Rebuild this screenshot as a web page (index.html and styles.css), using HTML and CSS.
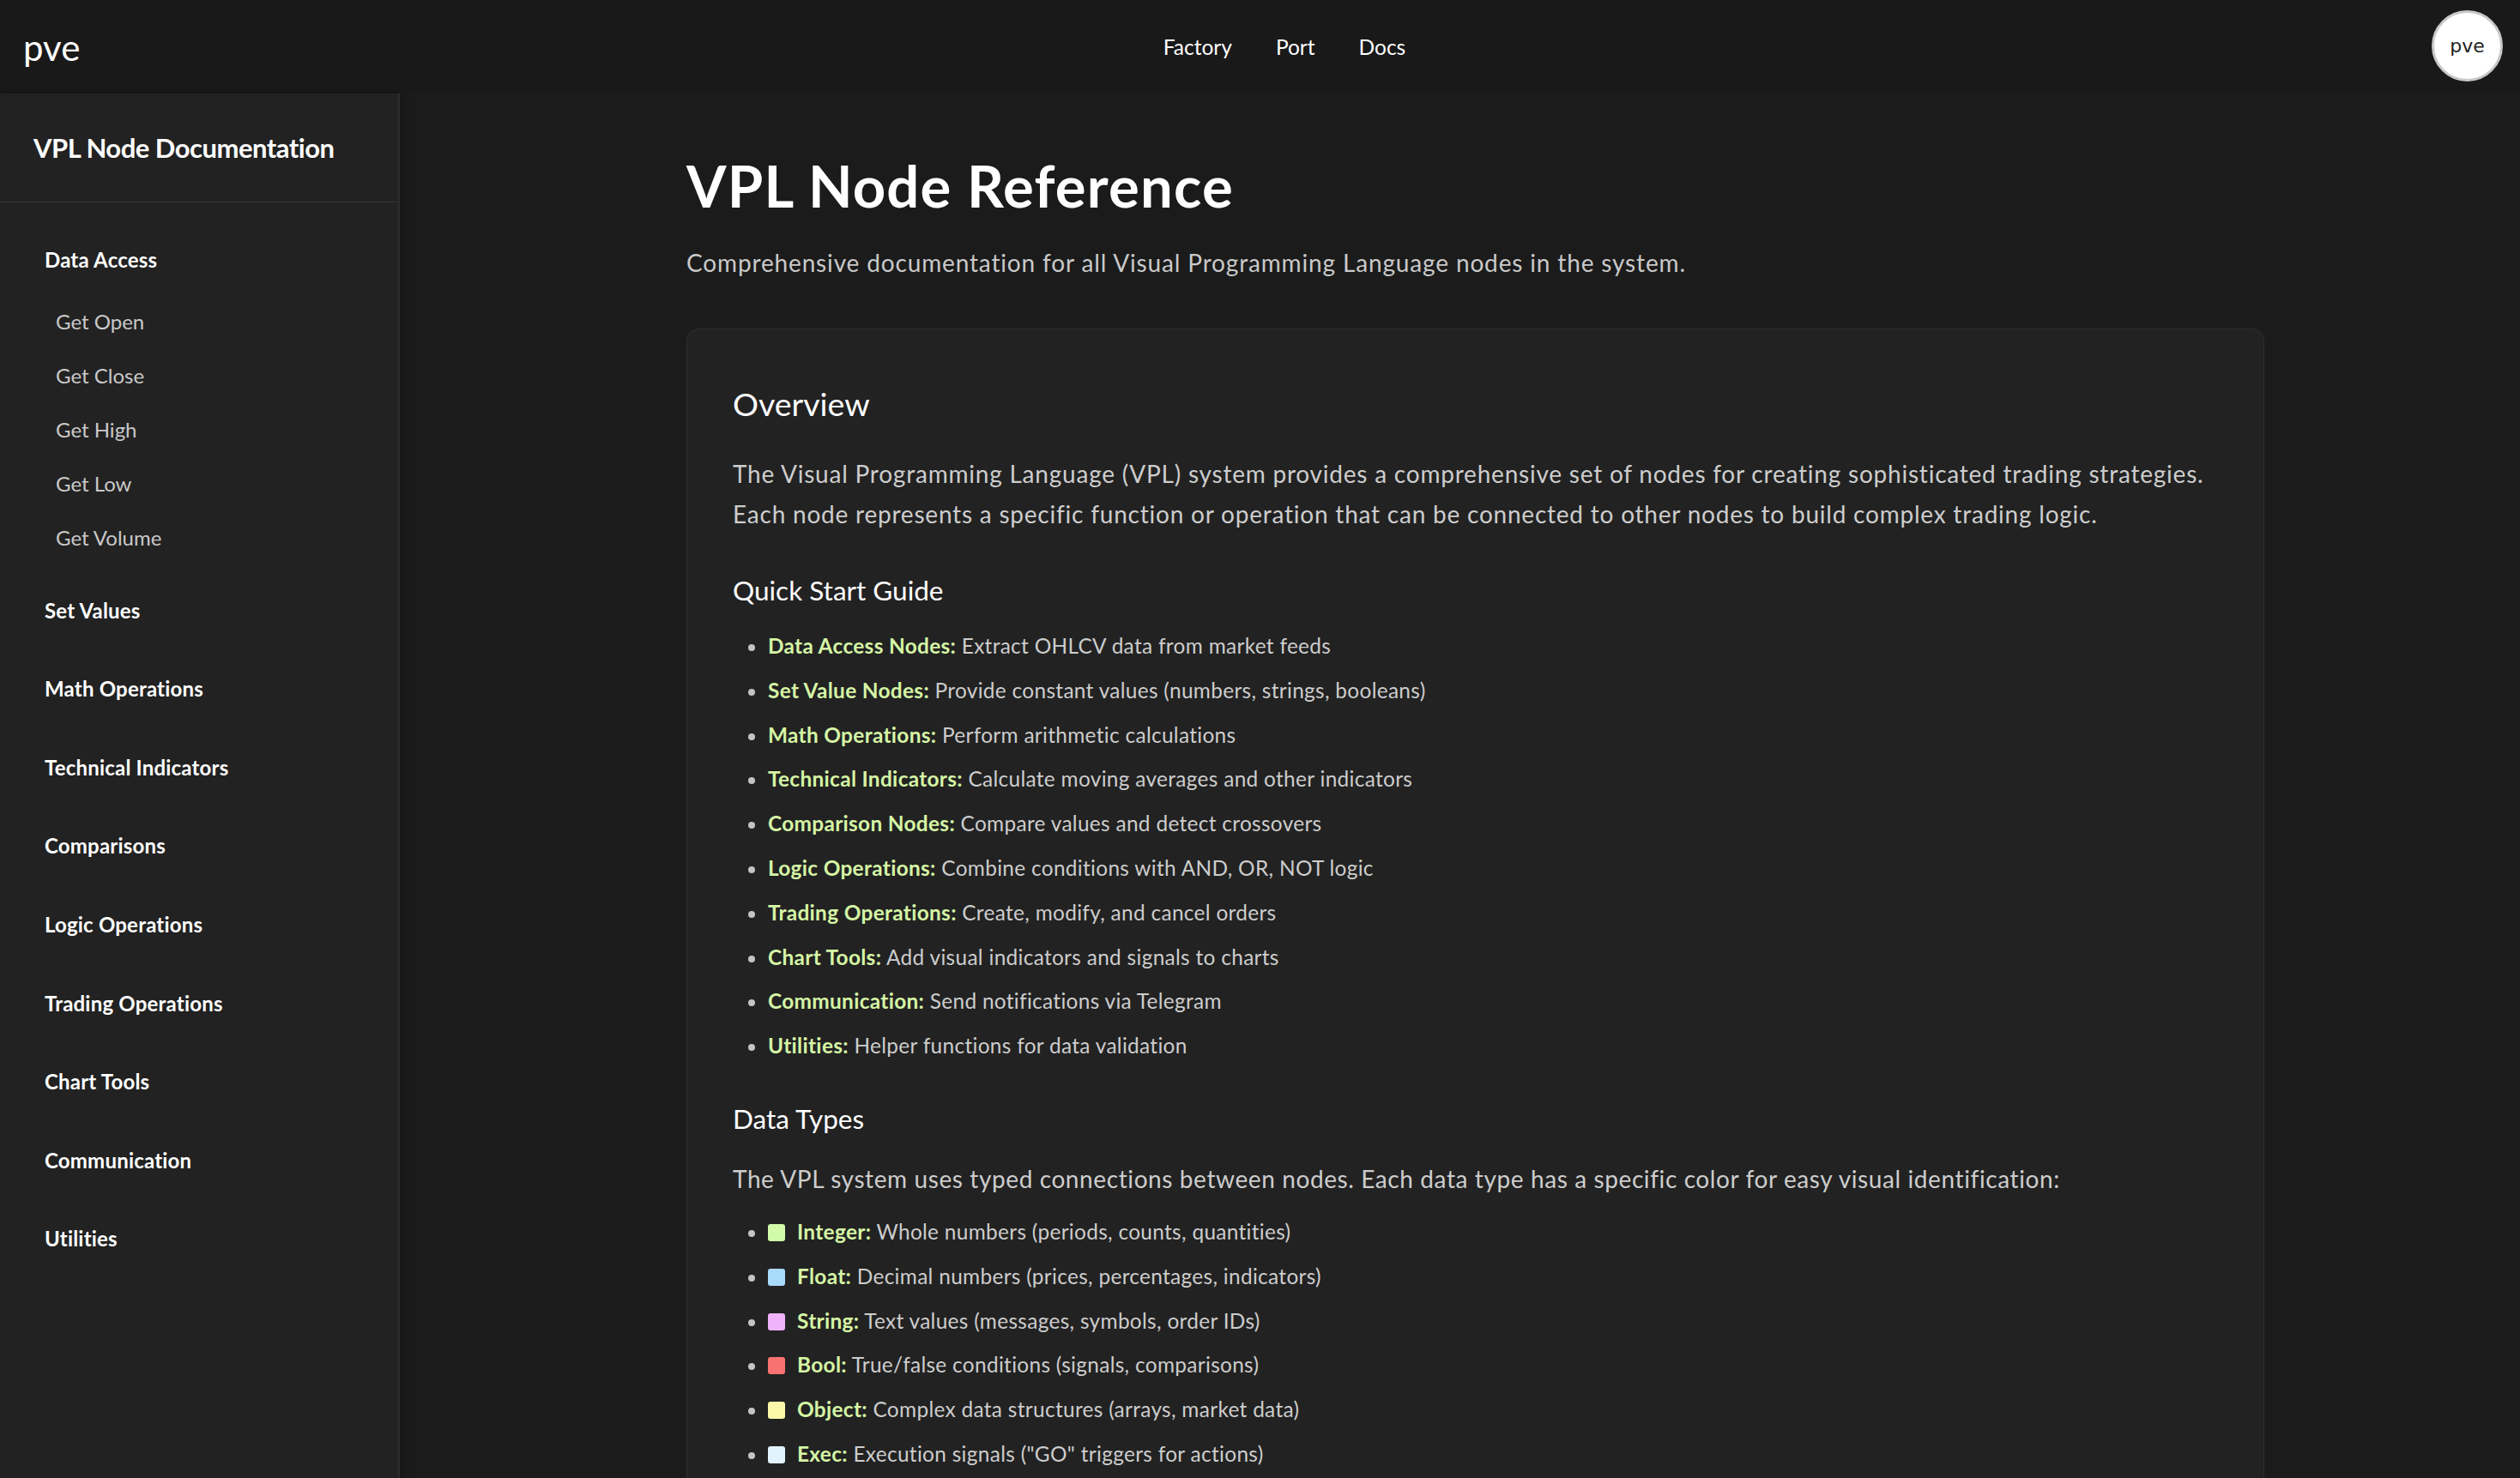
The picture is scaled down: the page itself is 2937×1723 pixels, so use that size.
FILE: index.html
```html
<!DOCTYPE html>
<html lang="en">
<head>
<meta charset="utf-8">
<title>VPL Node Reference</title>
<link rel="stylesheet" href="styles.css">
</head>
<body>
<div class="app">
  <header class="topbar">
    <div class="brand">pve</div>
    <nav class="topnav">
      <a href="#">Factory</a>
      <a href="#">Port</a>
      <a href="#">Docs</a>
    </nav>
    <div class="user-area"><div class="avatar">pve</div></div>
  </header>
  <div class="body-row">
    <aside class="sidebar">
      <div class="sidebar-title">VPL Node Documentation</div>
      <nav class="side-nav">
        <div class="nav-section">
          <div class="nav-heading">Data Access</div>
          <ul class="nav-list">
            <li>Get Open</li>
            <li>Get Close</li>
            <li>Get High</li>
            <li>Get Low</li>
            <li>Get Volume</li>
          </ul>
        </div>
        <div class="nav-section"><div class="nav-heading">Set Values</div></div>
        <div class="nav-section"><div class="nav-heading">Math Operations</div></div>
        <div class="nav-section"><div class="nav-heading">Technical Indicators</div></div>
        <div class="nav-section"><div class="nav-heading">Comparisons</div></div>
        <div class="nav-section"><div class="nav-heading">Logic Operations</div></div>
        <div class="nav-section"><div class="nav-heading">Trading Operations</div></div>
        <div class="nav-section"><div class="nav-heading">Chart Tools</div></div>
        <div class="nav-section"><div class="nav-heading">Communication</div></div>
        <div class="nav-section"><div class="nav-heading">Utilities</div></div>
      </nav>
    </aside>
    <main class="main">
      <div class="content">
        <h1 class="page-title">VPL Node Reference</h1>
        <p class="page-subtitle">Comprehensive documentation for all Visual Programming Language nodes in the system.</p>
        <section class="card">
          <h2 class="card-title">Overview</h2>
          <p class="lead">The Visual Programming Language (VPL) system provides a comprehensive set of nodes for creating sophisticated trading strategies. Each node represents a specific function or operation that can be connected to other nodes to build complex trading logic.</p>
          <h3 class="sub-title">Quick Start Guide</h3>
          <ul class="bullets">
            <li><strong>Data Access Nodes:</strong> Extract OHLCV data from market feeds</li>
            <li><strong>Set Value Nodes:</strong> Provide constant values (numbers, strings, booleans)</li>
            <li><strong>Math Operations:</strong> Perform arithmetic calculations</li>
            <li><strong>Technical Indicators:</strong> Calculate moving averages and other indicators</li>
            <li><strong>Comparison Nodes:</strong> Compare values and detect crossovers</li>
            <li><strong>Logic Operations:</strong> Combine conditions with AND, OR, NOT logic</li>
            <li><strong>Trading Operations:</strong> Create, modify, and cancel orders</li>
            <li><strong>Chart Tools:</strong> Add visual indicators and signals to charts</li>
            <li><strong>Communication:</strong> Send notifications via Telegram</li>
            <li><strong>Utilities:</strong> Helper functions for data validation</li>
          </ul>
          <h3 class="sub-title types-title">Data Types</h3>
          <p class="lead types-lead">The VPL system uses typed connections between nodes. Each data type has a specific color for easy visual identification:</p>
          <ul class="bullets types">
            <li><span class="swatch sw-int"></span><strong>Integer:</strong> Whole numbers (periods, counts, quantities)</li>
            <li><span class="swatch sw-float"></span><strong>Float:</strong> Decimal numbers (prices, percentages, indicators)</li>
            <li><span class="swatch sw-string"></span><strong>String:</strong> Text values (messages, symbols, order IDs)</li>
            <li><span class="swatch sw-bool"></span><strong>Bool:</strong> True/false conditions (signals, comparisons)</li>
            <li><span class="swatch sw-object"></span><strong>Object:</strong> Complex data structures (arrays, market data)</li>
            <li><span class="swatch sw-exec"></span><strong>Exec:</strong> Execution signals ("GO" triggers for actions)</li>
          </ul>
        </section>
      </div>
    </main>
  </div>
</div>
</body>
</html>
```
FILE: styles.css
```css
* { box-sizing: border-box; }
html, body { margin: 0; padding: 0; }
body {
  background: #1b1b1b;
  color: #d0d0d0;
  font-family: "Lato", "Open Sans", "Liberation Sans", sans-serif;
}
.app {
  height: 100vh;
  display: flex;
  flex-direction: column;
  overflow: hidden;
}
.topbar {
  height: 109px;
  flex: 0 0 109px;
  background: #191919;
  display: grid;
  grid-template-columns: 1fr auto 1fr;
  align-items: center;
  padding: 0 20px 0 27px;
}
.brand {
  font-size: 42px;
  color: #ffffff;
  line-height: 50px;
}
.topnav {
  display: flex;
  gap: 51px;
  margin-left: 50px;
}
.topnav a {
  color: #ffffff;
  text-decoration: none;
  font-size: 24.5px;
  line-height: 36px;
}
.user-area {
  display: flex;
  justify-content: flex-end;
}
.avatar {
  width: 83px;
  height: 83px;
  border-radius: 50%;
  background: #ffffff;
  border: 3px solid #c9c9c9;
  color: #1e1e1e;
  font-family: "DejaVu Sans", sans-serif;
  font-size: 22px;
  display: flex;
  align-items: center;
  justify-content: center;
  margin-top: -3px;
}
.body-row {
  flex: 1;
  display: flex;
  min-height: 0;
}
.sidebar {
  width: 466px;
  flex: 0 0 466px;
  background: #222222;
  border-right: 2px solid #2c2c2c;
  box-shadow: 2px 0 10px rgba(0, 0, 0, 0.25);
}
.sidebar-title {
  padding: 40px 38px 40px 39px;
  line-height: 46px;
  font-size: 31px;
  font-weight: 700;
  letter-spacing: -0.5px;
  color: #ffffff;
  border-bottom: 1px solid #353535;
}
.side-nav {
  padding: 39px 0 0 52px;
}
.nav-section {
  display: flex;
  flex-direction: column;
  margin-bottom: 25.6px;
}
.nav-heading {
  padding: 10px 0;
  line-height: 36px;
  font-size: 24px;
  font-weight: 700;
  letter-spacing: 0.2px;
  color: #ffffff;
  margin-bottom: 10px;
}
.nav-list {
  list-style: none;
  margin: 2px 0 0;
  padding: 0 0 0 13px;
}
.nav-list li {
  padding: 13.5px 0;
  line-height: 36px;
  font-size: 24px;
  color: #c9c9c9;
}
.main {
  flex: 1;
  overflow: hidden;
  padding: 67px 0 0 334px;
}
.content {
  width: 1839px;
}
.page-title {
  margin: 0;
  font-size: 67px;
  line-height: 81px;
  font-weight: 700;
  letter-spacing: 1.2px;
  color: #ffffff;
}
.page-subtitle {
  margin: 28px 0 0;
  font-size: 28px;
  line-height: 42px;
  letter-spacing: 0.85px;
  color: #c9c9c9;
}
.card {
  margin-top: 56px;
  background: #222222;
  border: 1px solid #2f2f2f;
  border-radius: 14px;
  padding: 64px 53px 60px;
}
.card-title {
  margin: 0;
  font-size: 37.5px;
  line-height: 45px;
  font-weight: 400;
  color: #ffffff;
}
.lead {
  margin: 36px 0 0;
  font-size: 28px;
  line-height: 47px;
  letter-spacing: 0.78px;
  color: #cdcdcd;
}
.sub-title {
  margin: 46px 0 0;
  font-size: 31.5px;
  line-height: 38px;
  font-weight: 400;
  color: #ffffff;
}
.types-title { margin-top: 40px; }
.types-lead { margin-top: 28px; letter-spacing: 0.6px; }
.bullets {
  list-style: none;
  margin: 20px 0 0;
  padding: 0 0 0 18px;
}
.bullets.types { margin-top: 12px; }
.bullets li {
  font-size: 24.4px;
  line-height: 51.8px;
  letter-spacing: 0.32px;
  color: #cdcdcd;
}
.bullets li::before {
  content: "";
  display: inline-block;
  width: 8px;
  height: 8px;
  border-radius: 50%;
  background: #c4c4c4;
  margin-right: 15px;
  vertical-align: 3px;
}
.bullets strong {
  color: #d5f5a5;
  font-weight: 700;
}
.swatch {
  display: inline-block;
  width: 20px;
  height: 20px;
  border-radius: 3px;
  margin-right: 14px;
  vertical-align: -2px;
}
.sw-int { background: #d2fba9; }
.sw-float { background: #a9d9fb; }
.sw-string { background: #efb2fa; }
.sw-bool { background: #f87272; }
.sw-object { background: #fbf9a9; }
.sw-exec { background: #e3f3fd; }
```
